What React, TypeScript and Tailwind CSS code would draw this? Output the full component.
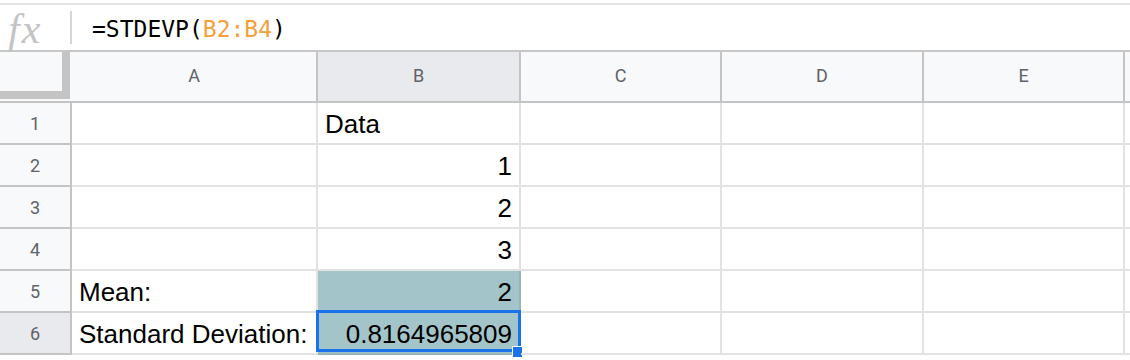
const cols = [
  { label: 'A', w: 'w-[246px]' },
  { label: 'B', w: 'w-[203px]' },
  { label: 'C', w: 'w-[201px]' },
  { label: 'D', w: 'w-[202px]' },
  { label: 'E', w: 'w-[201px]' },
];

type Cell = { text?: string; align?: 'left' | 'right'; fill?: boolean; selected?: boolean };

const rows: Cell[][] = [
  [{}, { text: 'Data' }, {}, {}, {}],
  [{}, { text: '1', align: 'right' }, {}, {}, {}],
  [{}, { text: '2', align: 'right' }, {}, {}, {}],
  [{}, { text: '3', align: 'right' }, {}, {}, {}],
  [{ text: 'Mean:' }, { text: '2', align: 'right', fill: true }, {}, {}, {}],
  [{ text: 'Standard Deviation:' }, { text: '0.8164965809', align: 'right', fill: true, selected: true }, {}, {}, {}],
];

const headFont = { fontFamily: 'Roboto, "Liberation Sans", sans-serif' };
const cellFont = { fontFamily: '"Liberation Sans", Arial, sans-serif' };

export default function App() {
  return (
    <div className="w-[1130px] h-[360px] overflow-hidden bg-white">
      {/* formula bar */}
      <div className="mt-[3px] flex h-[49px] items-center border-t-2 border-b-2 border-t-[#e3e3e3] border-b-[#c7c7c7]">
        <div className="flex w-[70px] items-center pl-[8px] pt-[2px]">
          <span
            className="text-[42px] italic leading-none tracking-[2px] text-[#c4c4c4]"
            style={{ fontFamily: '"Liberation Serif", "Times New Roman", serif' }}
          >
            fx
          </span>
        </div>
        <div className="h-[33px] w-[2px] bg-[#d6d6d6]" />
        <div
          className="pl-[20px] pt-[3px] text-[23px] text-black"
          style={{ fontFamily: '"DejaVu Sans Mono", "Liberation Mono", monospace' }}
        >
          =STDEVP(<span className="text-[#f4a03a]">B2:B4</span>)
        </div>
      </div>

      {/* column headers */}
      <div className="flex h-[51px] border-b-2 border-[#c4c4c4] bg-[#f8f9fa]" style={headFont}>
        <div className="w-[72px] shrink-0 pr-[2px]">
          <div className="h-[47px] border-r-[8px] border-b-[8px] border-[#c4c4c4] bg-[#f8f9fa]" />
        </div>
        {cols.map((c) => (
          <div
            key={c.label}
            className={`${c.w} shrink-0 flex items-center justify-center border-r-2 border-[#c4c4c4] pb-[2px] text-[18px] text-[#5f6368] ${
              c.label === 'B' ? 'bg-[#e8eaed]' : ''
            }`}
          >
            {c.label}
          </div>
        ))}
        <div className="flex-1" />
      </div>

      {/* rows */}
      {rows.map((r, i) => (
        <div key={i} className="flex h-[42px]">
          <div
            className={`w-[72px] shrink-0 flex items-center justify-center border-r-2 border-b-2 border-[#c4c4c4] text-[18px] text-[#5f6368] ${
              i === 5 ? 'bg-[#e8eaed]' : 'bg-[#f8f9fa]'
            }`}
            style={headFont}
          >
            {i + 1}
          </div>
          {r.map((cell, j) => (
            <div
              key={j}
              className={`${cols[j].w} relative shrink-0 flex items-end border-r-2 border-b-2 px-[7px] pb-[4px] text-[26px] leading-[30px] text-black ${
                cell.fill ? 'bg-[#a3c5c9] border-[#98b6ba]' : 'border-[#e2e2e2]'
              } ${cell.align === 'right' ? 'justify-end' : 'justify-start'}`}
              style={cellFont}
            >
              {cell.text}
              {cell.selected && (
                <>
                  <div className="absolute left-[-2px] top-[-3px] right-[-2px] bottom-[1px] border-[3px] border-[#1a73e8]" />
                  <div className="absolute right-[-4px] bottom-[-5px] h-[12px] w-[11px] border border-white bg-[#1a73e8]" />
                </>
              )}
            </div>
          ))}
          <div className="flex-1 border-b-2 border-[#e2e2e2]" />
        </div>
      ))}
    </div>
  );
}
